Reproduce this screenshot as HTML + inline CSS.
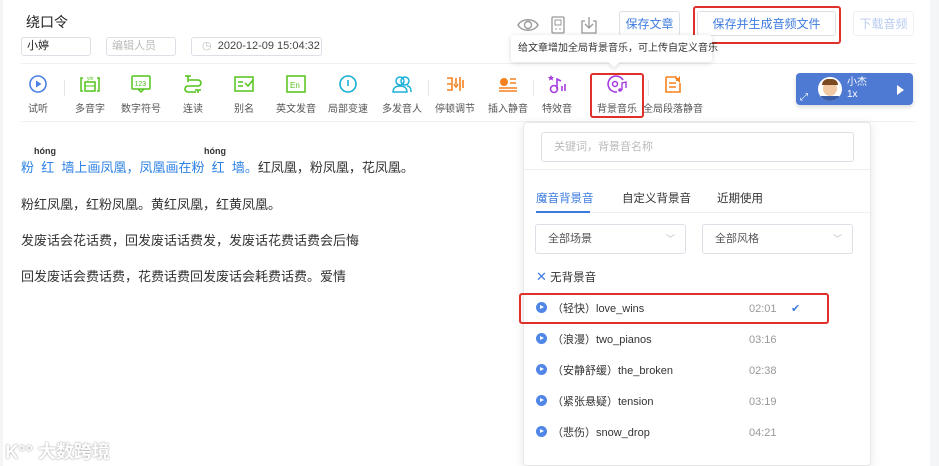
<!DOCTYPE html>
<html><head><meta charset="utf-8"><style>
*{margin:0;padding:0;box-sizing:border-box}
body{width:939px;height:466px;overflow:hidden;background:#fff;font-family:"Liberation Sans","Noto Sans CJK SC",sans-serif;color:#333;position:relative}
.a{position:absolute;white-space:nowrap}
.inp{position:absolute;border:1px solid #dcdfe6;border-radius:3px;font-size:11px;height:19px;line-height:17px;padding-left:5px;white-space:nowrap}
.btn{position:absolute;border:1px solid #dcdfe6;border-radius:3px;font-size:12px;color:#3d7be0;text-align:center;height:25px;line-height:25px;background:#fff}
.it{position:absolute;top:74px;width:60px;text-align:center;font-size:10px;color:#555;white-space:nowrap}
.it svg{display:block;margin:0 auto 6px;width:20px;height:20px}
.sep{position:absolute;top:80px;width:1px;height:16px;background:#e6e6e6}
.p{position:absolute;left:21px;font-size:13px;color:#333;white-space:nowrap}
.row{position:absolute;left:536px;font-size:11px;color:#333;height:18px;line-height:18px;width:300px}
.row i{display:inline-block;width:11px;height:11px;border-radius:50%;background:#4f86e8;vertical-align:-1px;margin-right:5px;position:relative}
.row i:after{content:"";position:absolute;left:4px;top:3px;border-left:4px solid #fff;border-top:2.5px solid transparent;border-bottom:2.5px solid transparent}
.row b{font-weight:normal;position:absolute;left:213px;color:#999;top:0}
</style></head><body>
<div class="a" style="right:0;top:0;width:9px;height:466px;background:#f4f5f7"></div>
<div class="a" style="left:0;top:0;width:3px;height:466px;background:#f4f5f7"></div>
<div class="a" style="left:26px;top:12px;font-size:14px;color:#222">绕口令</div>
<div class="inp" style="left:21px;top:37px;width:70px;color:#222">小婷</div>
<div class="inp" style="left:106px;top:37px;width:70px;color:#bbb">编辑人员</div>
<div class="inp" style="left:191px;top:37px;width:131px;color:#444;padding-left:10px"><span style="color:#bbb">◷</span>&nbsp; 2020-12-09 15:04:32</div>
<div class="a" style="left:21px;top:63px;width:894px;height:1px;background:#eef0f3"></div>
<svg class="a" style="left:517px;top:17px" width="22" height="16" viewBox="0 0 22 16"><path d="M1 8C5 1 17 1 21 8C17 15 5 15 1 8Z" fill="none" stroke="#999" stroke-width="1.4"/><circle cx="11" cy="8" r="3.5" fill="none" stroke="#999" stroke-width="1.4"/></svg>
<svg class="a" style="left:551px;top:16px" width="14" height="18" viewBox="0 0 14 18"><rect x="1" y="1" width="12" height="16" rx="1" fill="none" stroke="#999" stroke-width="1.3"/><rect x="4" y="4" width="6" height="5" fill="none" stroke="#999"/><path d="M4 13h2M8 13h2" stroke="#999"/></svg>
<svg class="a" style="left:580px;top:16px" width="18" height="18" viewBox="0 0 18 18"><path d="M5 5H2v12h14V5h-3M9 1v11M5 8l4 4 4-4" fill="none" stroke="#999" stroke-width="1.3"/></svg>
<div class="btn" style="left:619px;top:11px;width:61px">保存文章</div>
<div class="btn" style="left:697px;top:11px;width:139px">保存并生成音频文件</div>
<div class="a" style="left:693px;top:6px;width:148px;height:38px;border:2px solid #e0302a;border-radius:3px"></div>
<div class="btn" style="left:853px;top:11px;width:61px;color:#b8cbef;border-color:#edf0f5">下载音频</div>
<div class="a" style="left:511px;top:35px;width:201px;height:27px;background:#fff;box-shadow:0 1px 6px rgba(0,0,0,.15);border-radius:3px;font-size:10px;line-height:27px;padding-left:7px;color:#333">给文章增加全局背景音乐，可上传自定义音乐</div>
<div class="a" style="left:610px;top:58px;width:8px;height:8px;background:#fff;transform:rotate(45deg);box-shadow:2px 2px 3px rgba(0,0,0,.08)"></div>
<div class="it" style="left:8px"><svg viewBox="0 0 20 20"><circle cx="10" cy="10" r="8" fill="none" stroke="#4a7fe3" stroke-width="1.6"/><path d="M8 6.5v7l5.5-3.5z" fill="#4a7fe3"/></svg>试听</div>
<div class="sep" style="left:64px"></div>
<div class="it" style="left:60px"><svg viewBox="0 0 20 20"><path d="M3 4H1v13h2M17 4h2v13h-2" fill="none" stroke="#52c41a" stroke-width="1.5"/><rect x="5" y="8" width="10" height="9" fill="none" stroke="#52c41a" stroke-width="1.5"/><path d="M5 12h10" stroke="#52c41a"/><text x="7" y="6" font-size="5" fill="#52c41a">yin</text></svg>多音字</div>
<div class="it" style="left:111px"><svg viewBox="0 0 20 20"><rect x="1" y="2" width="18" height="13" rx="1" fill="none" stroke="#52c41a" stroke-width="1.5"/><path d="M7 15l3 3 3-3" fill="none" stroke="#52c41a" stroke-width="1.5"/><text x="3.5" y="12" font-size="7" fill="#52c41a" font-family="Liberation Sans">123</text></svg>数字符号</div>
<div class="it" style="left:163px"><svg viewBox="0 0 20 20"><path d="M2 2h6M5 2v6M6 6h9a3 3 0 0 1 0 6H5a3 3 0 0 0 0 6h8M12 16h6M15 16v3" fill="none" stroke="#52c41a" stroke-width="1.6"/></svg>连读</div>
<div class="it" style="left:214px"><svg viewBox="0 0 20 20"><rect x="1" y="3" width="18" height="14" fill="none" stroke="#52c41a" stroke-width="1.5"/><path d="M4 8h5M4 12h5M11 9l3 3 5-6" fill="none" stroke="#52c41a" stroke-width="1.5"/></svg>别名</div>
<div class="it" style="left:266px"><svg viewBox="0 0 20 20"><rect x="1" y="2" width="18" height="16" fill="none" stroke="#52c41a" stroke-width="1.5"/><text x="4" y="14" font-size="8" fill="#52c41a" font-family="Liberation Sans">En</text></svg>英文发音</div>
<div class="it" style="left:318px"><svg viewBox="0 0 20 20"><circle cx="10" cy="10" r="8" fill="none" stroke="#1ab0d8" stroke-width="1.6"/><path d="M10 6v6" stroke="#1ab0d8" stroke-width="1.6"/></svg>局部变速</div>
<div class="it" style="left:372px"><svg viewBox="0 0 20 20"><circle cx="8" cy="7" r="4" fill="none" stroke="#1ab0d8" stroke-width="1.5"/><circle cx="13" cy="7" r="4" fill="none" stroke="#1ab0d8" stroke-width="1.5"/><path d="M1 18c0-5 4-6 7-6s7 1 7 6zM15 12c3 0 4 2 4 6" fill="none" stroke="#1ab0d8" stroke-width="1.5"/></svg>多发音人</div>
<div class="sep" style="left:428px"></div>
<div class="it" style="left:425px"><svg viewBox="0 0 20 20"><path d="M2 4h5v12H2M2 10h4M9 10l2 3 2-3M11 4v6M15 3v14M18 6v8" fill="none" stroke="#f5821f" stroke-width="1.6"/></svg>停顿调节</div>
<div class="it" style="left:478px"><svg viewBox="0 0 20 20"><circle cx="6" cy="8" r="4" fill="#f5821f"/><path d="M12 5h6M12 9h6M1 14h18M1 17h18" stroke="#f5821f" stroke-width="1.6"/></svg>插入静音</div>
<div class="sep" style="left:533px"></div>
<div class="it" style="left:527px"><svg viewBox="0 0 20 20"><path d="M4 1l1 2h2l-1.5 1.5.5 2-2-1-2 1 .5-2L1 3h2z" fill="#a43ce0"/><circle cx="7" cy="15" r="3.5" fill="none" stroke="#a43ce0" stroke-width="1.6"/><path d="M10 15V5l4 2M15 12v5M18 10v7" fill="none" stroke="#a43ce0" stroke-width="1.6"/></svg>特效音</div>
<div class="it" style="left:587px"><svg viewBox="0 0 20 20"><path d="M16 6A8 8 0 1 0 10 18" fill="none" stroke="#a43ce0" stroke-width="1.6"/><circle cx="8" cy="10" r="2.5" fill="none" stroke="#a43ce0" stroke-width="1.5"/><circle cx="13" cy="16" r="1.8" fill="#a43ce0"/><path d="M15 16V9l4-1v6" fill="none" stroke="#a43ce0" stroke-width="1.4"/></svg>背景音乐</div>
<div class="a" style="left:590px;top:73px;width:54px;height:45px;border:2px solid #e0302a;border-radius:3px"></div>
<div class="sep" style="left:648px"></div>
<div class="it" style="left:643px;width:60px"><svg viewBox="0 0 20 20"><path d="M3 3h10v2M3 3v15h14V9" fill="none" stroke="#f5821f" stroke-width="1.6"/><path d="M6 9h7M6 13h7" stroke="#f5821f" stroke-width="1.5"/><path d="M13 4h2l2-2v7l-2-2h-2z" fill="#f5821f"/></svg>全局段落静音</div>
<div class="a" style="left:796px;top:73px;width:117px;height:32px;background:#4e7ad3;border-radius:4px;box-shadow:0 2px 4px rgba(0,0,0,.15)"></div>
<div class="a" style="left:818px;top:77px;width:24px;height:24px;border-radius:50%;background:#fff;overflow:hidden"><div style="position:absolute;left:5px;top:4px;width:14px;height:15px;border-radius:50%;background:#f1c9a5"></div><div style="position:absolute;left:4px;top:2px;width:16px;height:6px;border-radius:6px 6px 0 0;background:#7a4a22"></div><div style="position:absolute;left:3px;top:19px;width:18px;height:6px;background:#3a5fa8"></div></div>
<div class="a" style="left:847px;top:77px;font-size:10px;color:#fff;line-height:12px">小杰<br>1x</div>
<div class="a" style="left:800px;top:92px;font-size:10px;color:#fff">⤢</div>
<div class="a" style="left:897px;top:85px;border-left:7px solid #fff;border-top:5px solid transparent;border-bottom:5px solid transparent"></div>
<div class="a" style="left:21px;top:121px;width:894px;height:1px;background:#eef0f3"></div>
<div class="a" style="left:34px;top:146px;font-size:9px;color:#333;font-weight:bold">hóng</div>
<div class="a" style="left:204px;top:146px;font-size:9px;color:#333;font-weight:bold">hóng</div>
<div class="p" style="top:157px"><span style="color:#2e82e6">粉&nbsp;&nbsp;红&nbsp;&nbsp;墙上画凤凰，凤凰画在粉&nbsp;&nbsp;红&nbsp;&nbsp;墙。</span>红凤凰，粉凤凰，花凤凰。</div>
<div class="p" style="top:194px">粉红凤凰，红粉凤凰。黄红凤凰，红黄凤凰。</div>
<div class="p" style="top:230px">发废话会花话费，回发废话话费发，发废话花费话费会后悔</div>
<div class="p" style="top:266px">回发废话会费话费，花费话费回发废话会耗费话费。爱情</div>
<div class="a" style="left:6px;top:438px;font-size:18px;color:#fff;font-weight:bold;text-shadow:0 0 2px #aaa,0 0 1px #bbb">Ꮶ°° 大数跨境</div>
<div class="a" style="left:523px;top:122px;width:348px;height:344px;background:#fff;border:1px solid #e8e8e8;border-radius:4px;box-shadow:0 2px 10px rgba(0,0,0,.1)"></div>
<div class="a" style="left:541px;top:132px;width:313px;height:30px;border:1px solid #dcdfe6;border-radius:3px;font-size:11px;color:#bbb;line-height:28px;padding-left:12px">关键词，背景音名称</div>
<div class="a" style="left:524px;top:169px;width:346px;height:1px;background:#eee"></div>
<div class="a" style="left:536px;top:190px;font-size:11.5px;color:#3d7be0">魔音背景音</div>
<div class="a" style="left:622px;top:190px;font-size:11.5px;color:#333">自定义背景音</div>
<div class="a" style="left:717px;top:190px;font-size:11.5px;color:#333">近期使用</div>
<div class="a" style="left:536px;top:211px;width:54px;height:2px;background:#3d7be0"></div>
<div class="a" style="left:590px;top:212px;width:280px;height:1px;background:#eee"></div>
<div class="a" style="left:535px;top:224px;width:151px;height:30px;border:1px solid #dcdfe6;border-radius:3px;font-size:11px;color:#555;line-height:28px;padding-left:12px">全部场景<span style="position:absolute;right:10px;color:#bbb;font-size:9px">﹀</span></div>
<div class="a" style="left:702px;top:224px;width:151px;height:30px;border:1px solid #dcdfe6;border-radius:3px;font-size:11px;color:#555;line-height:28px;padding-left:12px">全部风格<span style="position:absolute;right:10px;color:#bbb;font-size:9px">﹀</span></div>
<div class="a" style="left:536px;top:269px;font-size:11.5px;color:#333"><span style="color:#3d7be0;font-size:13px">✕</span> 无背景音</div>
<div class="row" style="top:300px"><i></i>（轻快）love_wins<b>02:01</b><span style="position:absolute;left:255px;color:#3d7be0">✔</span></div>
<div class="a" style="left:519px;top:293px;width:310px;height:31px;border:2px solid #e0302a;border-radius:3px"></div>
<div class="row" style="top:331px"><i></i>（浪漫）two_pianos<b>03:16</b></div>
<div class="row" style="top:362px"><i></i>（安静舒缓）the_broken<b>02:38</b></div>
<div class="row" style="top:393px"><i></i>（紧张悬疑）tension<b>03:19</b></div>
<div class="row" style="top:424px"><i></i>（悲伤）snow_drop<b>04:21</b></div>
</body></html>
